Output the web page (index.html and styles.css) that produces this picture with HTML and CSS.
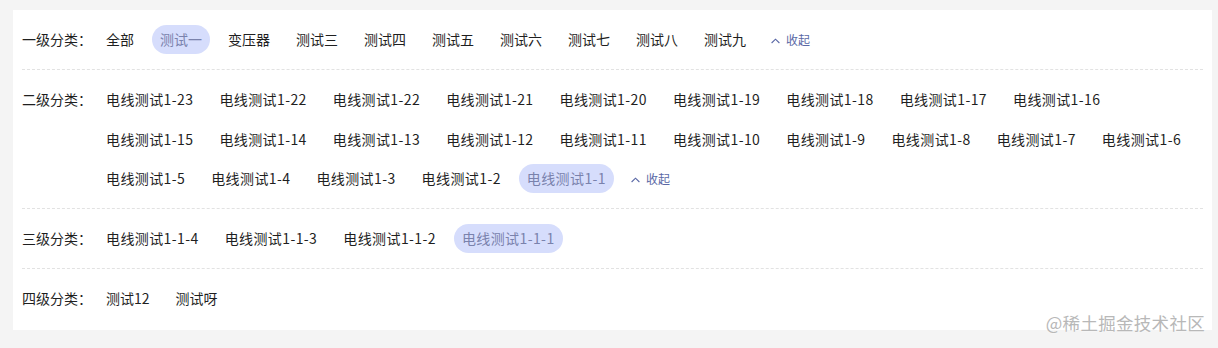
FILE: index.html
```html
<!DOCTYPE html>
<html lang="zh-CN">
<head>
<meta charset="utf-8">
<title>分类筛选</title>
<link rel="stylesheet" href="styles.css">
</head>
<body>
<div class="card">
  <div class="row">
    <div class="label">一级分类：</div>
    <div class="items">
      <span class="item">全部</span>
      <span class="item active">测试一</span>
      <span class="item">变压器</span>
      <span class="item">测试三</span>
      <span class="item">测试四</span>
      <span class="item">测试五</span>
      <span class="item">测试六</span>
      <span class="item">测试七</span>
      <span class="item">测试八</span>
      <span class="item">测试九</span>
      <span class="item toggle"><svg class="chev" width="9" height="10" viewBox="0 0 9 10"><path d="M0.6 7 L4.5 3.2 L8.4 7" fill="none" stroke="currentColor" stroke-width="1.1"/></svg>收起</span>
    </div>
  </div>
  <div class="row">
    <div class="label">二级分类：</div>
    <div class="items code">
      <span class="item">电线测试1-23</span>
      <span class="item">电线测试1-22</span>
      <span class="item">电线测试1-22</span>
      <span class="item">电线测试1-21</span>
      <span class="item">电线测试1-20</span>
      <span class="item">电线测试1-19</span>
      <span class="item">电线测试1-18</span>
      <span class="item">电线测试1-17</span>
      <span class="item">电线测试1-16</span>
      <span class="item">电线测试1-15</span>
      <span class="item">电线测试1-14</span>
      <span class="item">电线测试1-13</span>
      <span class="item">电线测试1-12</span>
      <span class="item">电线测试1-11</span>
      <span class="item">电线测试1-10</span>
      <span class="item">电线测试1-9</span>
      <span class="item">电线测试1-8</span>
      <span class="item">电线测试1-7</span>
      <span class="item">电线测试1-6</span>
      <span class="item">电线测试1-5</span>
      <span class="item">电线测试1-4</span>
      <span class="item">电线测试1-3</span>
      <span class="item">电线测试1-2</span>
      <span class="item active">电线测试1-1</span>
      <span class="item toggle"><svg class="chev" width="9" height="10" viewBox="0 0 9 10"><path d="M0.6 7 L4.5 3.2 L8.4 7" fill="none" stroke="currentColor" stroke-width="1.1"/></svg>收起</span>
    </div>
  </div>
  <div class="row">
    <div class="label">三级分类：</div>
    <div class="items code">
      <span class="item">电线测试1-1-4</span>
      <span class="item">电线测试1-1-3</span>
      <span class="item">电线测试1-1-2</span>
      <span class="item active">电线测试1-1-1</span>
    </div>
  </div>
  <div class="row last">
    <div class="label">四级分类：</div>
    <div class="items">
      <span class="item">测试12</span>
      <span class="item">测试呀</span>
    </div>
  </div>
  <div class="watermark">@稀土掘金技术社区</div>
</div>
</body>
</html>
```

FILE: styles.css
```css
html, body {
  margin: 0;
  background: #f4f4f4;
}
body {
  padding: 10px 6px 18px 13px;
  font-family: "Noto Sans CJK SC", "Noto Sans", sans-serif;
  font-size: 14px;
  color: #1f1f1f;
}
.card {
  position: relative;
  background: #fff;
  padding: 0 9px;
  height: 320px;
  box-sizing: border-box;
}
.row {
  display: flex;
  align-items: flex-start;
  padding: 15px 0;
  border-bottom: 1px dashed #e2e2e2;
}
.row.last {
  border-bottom: none;
}
.label {
  flex: 0 0 76px;
  line-height: 29px;
  white-space: nowrap;
}
.items {
  flex: 1;
  display: flex;
  flex-wrap: wrap;
  column-gap: 10px;
  row-gap: 10.5px;
}
.items.code {
  letter-spacing: 0.4px;
}
.item {
  display: inline-flex;
  align-items: center;
  height: 29px;
  padding: 0 8px;
  border-radius: 15px;
  line-height: 21px;
  white-space: nowrap;
  box-sizing: border-box;
}
.item.active {
  background: #d6ddfc;
  color: #7a82ac;
}
.item.toggle {
  color: #5a68a6;
  font-size: 12px;
  letter-spacing: 0;
  padding-left: 7px;
}
.chev {
  margin-right: 6px;
  margin-top: 2px;
}
.watermark {
  position: absolute;
  right: 7px;
  bottom: -5px;
  font-size: 17.5px;
  color: #b8b8b8;
  letter-spacing: 0.3px;
  text-shadow: 0 0 2px #fff;
}
```
